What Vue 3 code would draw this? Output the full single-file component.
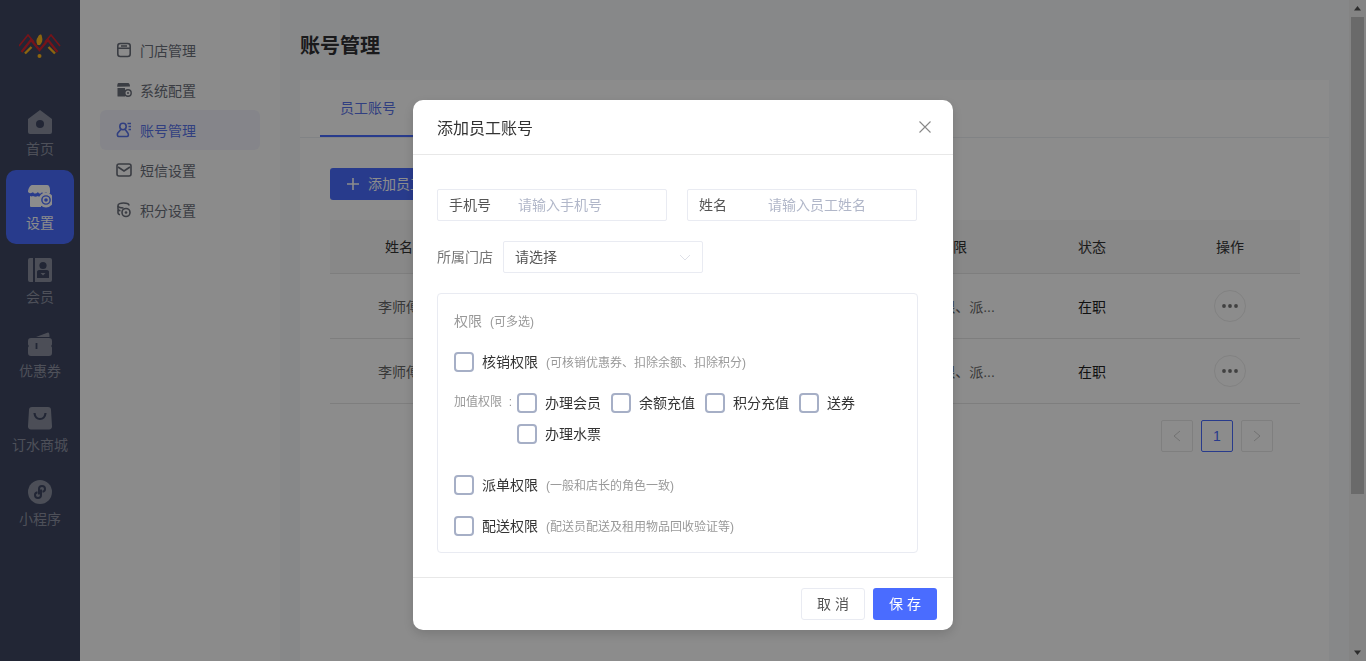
<script setup>
const sideItems = [
  { key: 'home', label: '首页' },
  { key: 'setting', label: '设置', active: true },
  { key: 'member', label: '会员' },
  { key: 'coupon', label: '优惠券' },
  { key: 'shop', label: '订水商城' },
  { key: 'mini', label: '小程序' },
];
const subItems = [
  { key: 'store', label: '门店管理' },
  { key: 'config', label: '系统配置' },
  { key: 'account', label: '账号管理', active: true },
  { key: 'sms', label: '短信设置' },
  { key: 'points', label: '积分设置' },
];
const rows = [
  { name: '李师傅', perm: '核销权限、派...', state: '在职' },
  { name: '李师傅', perm: '核销权限、派...', state: '在职' },
];
const valueOptions = ['办理会员', '余额充值', '积分充值', '送券', '办理水票'];
</script>

<template>
  <div class="page">
    <aside class="sidebar">
      <div class="logo">
        <svg width="42" height="26" viewBox="0 0 42 26" fill="none">
          <path d="M0 13 9 2 15 9M41 13 32 2 26 9" stroke="#d8242e" stroke-width="1.6" />
          <path d="M2.500 19 12 7 20.500 17 29 7 38.500 19" stroke="#d8242e" stroke-width="2.200" />
          <path d="M18.500 12c-1.500-3-1.500-6 .5-8 .5-2 2.500-3 3.500-2l.5 2c1 3 0 6-2 8z" fill="#ffb81c" />
          <path d="M6 20.500l6.500-6.500M36 20.500 29.500 14" stroke="#ffb81c" stroke-width="2.400" />
          <circle cx="20.500" cy="23" r="2" fill="#ffb81c" />
        </svg>
      </div>
      <div v-for="item in sideItems" :key="item.key" class="side-item" :class="{ active: item.active }">
        <svg class="side-icon" width="24" height="24" viewBox="0 0 24 24">
          <template v-if="item.key === 'home'">
            <path class="fill" d="M12 0 24 9v13a2 2 0 0 1-2 2H2a2 2 0 0 1-2-2V9z" />
            <circle class="hole" cx="12" cy="14" r="4" />
          </template>
          <template v-else-if="item.key === 'setting'">
            <path class="fill" d="M4 1h15c2 0 3 2 3 5v3c-2 1-3 0-4-1-1 1-3 2-4 0-1 2-3 2-4 0-2 2-4 2-5 0-1 1-3 2-5 0 0-3 2-7 4-7z" />
            <path class="fill" d="M2 12c1 .6 2 .6 3 0 2 1 3 1 5 0 1 1 2 1 3 .6V23H3a1 1 0 0 1-1-1z" />
            <circle class="fill" cx="18" cy="16" r="7.500" />
            <circle cx="18" cy="16" r="5.600" class="ring" />
            <circle cx="18" cy="16" r="2.600" fill="none" class="gear" stroke-width="1.600" />
          </template>
          <template v-else-if="item.key === 'member'">
            <path class="fill" d="M2 0h3v24H2a2 2 0 0 1-2-2V2a2 2 0 0 1 2-2zM7 0h15a2 2 0 0 1 2 2v20a2 2 0 0 1-2 2H7z" />
            <circle class="hole" cx="15" cy="7.500" r="3.600" />
            <path class="hole" d="M9 13.500a2 2 0 0 1 2-1.500h8a2 2 0 0 1 2 1.500V20H9z" />
            <path class="fill" d="M12.500 15h5L15 17.600z" />
          </template>
          <template v-else-if="item.key === 'coupon'">
            <path class="fill" d="M8 5 20 .5c1 0 1.500 1 1.500 4.500z" />
            <path class="fill" d="M3 6h18a3 3 0 0 1 3 3v3.500a2 2 0 0 0 0 3V21a3 3 0 0 1-3 3H3a3 3 0 0 1-3-3v-5.500a2 2 0 0 0 0-3V9a3 3 0 0 1 3-3z" />
            <rect class="hole" x="7.600" y="11" width="1.800" height="6" />
          </template>
          <template v-else-if="item.key === 'shop'">
            <path class="fill" d="M4 1h16a3 3 0 0 1 3 3l1 16a3 3 0 0 1-3 3.500H3A3 3 0 0 1 0 20L1 4a3 3 0 0 1 3-3z" />
            <path d="M6.500 7c.5 8 10.500 8 11 0" fill="none" class="gear" stroke-width="2.200" />
          </template>
          <template v-else>
            <circle class="fill" cx="12" cy="12" r="12" />
            <path d="M13 9.500v5.500c0 4-6 4-6 0 0-1.500 1-2.500 2.500-2.800M11 14.500V9c0-4 6-4 6 0 0 1.500-1 2.500-2.500 2.800" fill="none" class="gear" stroke-width="2" />
          </template>
        </svg>
        <span class="side-label">{{ item.label }}</span>
      </div>
    </aside>

    <nav class="subnav">
      <div v-for="item in subItems" :key="item.key" class="sub-item" :class="{ active: item.active }">
        <svg class="sub-icon" width="16" height="16" viewBox="0 0 16 16" fill="none" stroke="currentColor" stroke-width="1.600">
          <template v-if="item.key === 'store'">
            <rect x="1.800" y="1.500" width="12.400" height="13" rx="2.500" />
            <path d="M2 6.200h12M5 4h6" />
          </template>
          <template v-else-if="item.key === 'config'">
            <path d="M2.500 1h9.500c1.500 0 2 2 2 3.500l-12.800.2C1.200 3 1.500 1 2.500 1z" fill="currentColor" stroke="none" />
            <path d="M1.500 6h7.500v8.500H2a.5.5 0 0 1-.5-.5z" fill="currentColor" stroke="none" />
            <circle cx="12" cy="11" r="3.200" stroke-width="1.400" />
            <circle cx="12" cy="11" r="1" fill="currentColor" stroke="none" />
          </template>
          <template v-else-if="item.key === 'account'">
            <circle cx="7" cy="4.500" r="3.200" />
            <path d="M4.800 7.500 1.800 11c-.8 1.300-.5 3.500 1 3.500h8c1.800 0 2-2.200 1-3.500L9.200 7.500" />
            <path d="M11.500 1.500h3.500M12.500 4.500H15M12.500 7.500H15" stroke-width="1.300" />
          </template>
          <template v-else-if="item.key === 'sms'">
            <rect x="1" y="2" width="14" height="12" rx="2" />
            <path d="M2 5l6 4 6-4" />
          </template>
          <template v-else>
            <path d="M13 3.500C13 2 10.500 1 7.500 1S2 2 2 3.500 4.500 6 7.500 6" />
            <path d="M2 4v3c0 .8 1 1.500 2.500 1.800M2 8v3c0 .8.800 1.500 2 1.800" />
            <circle cx="10" cy="10.500" r="4" />
            <circle cx="10" cy="10.500" r="1.300" fill="currentColor" stroke="none" />
          </template>
        </svg>
        <span>{{ item.label }}</span>
      </div>
    </nav>

    <main class="main">
      <h1 class="page-title">账号管理</h1>
      <section class="card">
        <div class="tabs">
          <div class="tab active"><span class="lift">员工账号</span></div>
        </div>
        <div class="card-body">
          <button class="add-btn">
            <svg width="12" height="12" viewBox="0 0 12 12"><path d="M6 0v12M0 6h12" stroke="currentColor" stroke-width="1.600" /></svg>
            <span class="lift">添加员工</span>
          </button>
          <div class="table">
            <div class="tr th">
              <div>姓名</div>
              <div></div>
              <div></div>
              <div>权限</div>
              <div>状态</div>
              <div>操作</div>
            </div>
            <div v-for="(row, i) in rows" :key="i" class="tr td">
              <div>{{ row.name }}</div>
              <div></div>
              <div></div>
              <div class="perm-cell">{{ row.perm }}</div>
              <div class="state-cell">{{ row.state }}</div>
              <div>
                <span class="more">
                  <svg width="16" height="4" viewBox="0 0 16 4" fill="currentColor">
                    <circle cx="2" cy="2" r="1.900" /><circle cx="8" cy="2" r="1.900" /><circle cx="14" cy="2" r="1.900" />
                  </svg>
                </span>
              </div>
            </div>
          </div>
          <div class="pager">
            <span class="pg">
              <svg width="8" height="12" viewBox="0 0 8 12" fill="none" stroke="currentColor"><path d="M7 1 1 6l6 5" /></svg>
            </span>
            <span class="pg current">1</span>
            <span class="pg">
              <svg width="8" height="12" viewBox="0 0 8 12" fill="none" stroke="currentColor"><path d="m1 1 6 5-6 5" /></svg>
            </span>
          </div>
        </div>
      </section>
    </main>

    <div class="scrollbar">
      <svg class="sb-arrow" width="17" height="17" viewBox="0 0 17 17"><path d="M8.500 6 12 10.500H5z" /></svg>
      <div class="sb-track"><div class="sb-thumb"></div></div>
      <svg class="sb-arrow" width="17" height="17" viewBox="0 0 17 17"><path d="M8.500 11 12 6.500H5z" /></svg>
    </div>

    <div class="mask">
      <div class="dialog">
        <header class="dialog-head">
          <span class="dialog-title">添加员工账号</span>
          <svg class="dialog-close" width="14" height="14" viewBox="0 0 14 14" fill="none" stroke="currentColor" stroke-width="1.100"><path d="m1.500 1.500 11 11M12.500 1.500l-11 11" /></svg>
        </header>
        <div class="dialog-body">
          <div class="form-row">
            <label class="field">
              <span class="field-label lift">手机号</span>
              <input class="field-input" placeholder="请输入手机号" />
            </label>
            <label class="field">
              <span class="field-label lift">姓名</span>
              <input class="field-input" placeholder="请输入员工姓名" />
            </label>
          </div>
          <div class="store-row">
            <span class="store-label lift">所属门店</span>
            <div class="select">
              <span class="lift">请选择</span>
              <svg width="12" height="7" viewBox="0 0 12 7" fill="none" stroke="#dfe1e8"><path d="m1 1 5 5 5-5" /></svg>
            </div>
          </div>
          <div class="perm-box">
            <div class="perm-title">权限<small>(可多选)</small></div>
            <label class="check-row">
              <input type="checkbox" class="check" />
              <span class="check-text lift">核销权限</span>
              <small class="hint lift">(可核销优惠券、扣除余额、扣除积分)</small>
            </label>
            <div class="value-row">
              <span class="value-label">加值权限&nbsp;&nbsp;:</span>
              <div class="value-opts">
                <label v-for="opt in valueOptions" :key="opt" class="opt">
                  <input type="checkbox" class="check" />
                  <span class="check-text lift">{{ opt }}</span>
                </label>
              </div>
            </div>
            <label class="check-row dispatch">
              <input type="checkbox" class="check" />
              <span class="check-text lift">派单权限</span>
              <small class="hint lift">(一般和店长的角色一致)</small>
            </label>
            <label class="check-row">
              <input type="checkbox" class="check" />
              <span class="check-text lift">配送权限</span>
              <small class="hint lift">(配送员配送及租用物品回收验证等)</small>
            </label>
          </div>
        </div>
        <footer class="dialog-foot">
          <button class="btn-cancel"><span class="lift">取 消</span></button>
          <button class="btn-save"><span class="lift">保 存</span></button>
        </footer>
      </div>
    </div>
  </div>
</template>

<style scoped>
.page {
  display: flex; width: 1366px; height: 661px; overflow: hidden; background: #f6f7f9;
  font-family: "Liberation Sans", "Noto Sans CJK SC", sans-serif; font-size: 14px; color: #333;
}
/* CJK glyphs sit a touch low in these boxes */
.lift { display: inline-block; margin-bottom: 2px; }

.sidebar { width: 80px; flex: none; background: #3e4661; display: flex; flex-direction: column; align-items: center; }
.logo { height: 96px; width: 100%; box-sizing: border-box; padding: 33px 0 0 19px; }
.logo svg { display: block; }
.side-item {
  width: 68px; height: 74px; box-sizing: border-box; padding-top: 14px; border-radius: 10px;
  display: flex; flex-direction: column; align-items: center; gap: 7px; color: #8f93a3;
}
.side-item.active { background: #4a6cff; color: #fff; }
.side-icon { display: block; }
.side-icon .fill { fill: #8a8f9f; }
.side-icon .hole { fill: #3e4661; }
.side-icon .gear { stroke: #3e4661; }
.side-icon .ring { fill: #4a6cff; stroke: #fff; stroke-width: 1.5; }
.side-item.active .fill { fill: #fff; }
.side-item.active .gear { stroke: #fff; }
.side-label { line-height: 16px; }

.subnav { width: 200px; flex: none; box-sizing: border-box; background: #fdfdfd; padding: 30px 20px 0; }
.sub-item { height: 40px; border-radius: 6px; display: flex; align-items: center; gap: 8px; padding-left: 16px; color: #6b6f7a; }
.sub-item.active { background: #f2f3fb; color: #5a73ea; }
.sub-icon { flex: none; }

.main { flex: 1; min-width: 0; display: flex; flex-direction: column; padding: 0 20px; }
.page-title { margin: 0; height: 80px; flex: none; display: flex; align-items: center; padding-top: 9px; box-sizing: border-box; font-size: 20px; font-weight: 700; color: #303133; }
.card { flex: 1; background: #fff; }
.tabs { height: 58px; box-sizing: border-box; border-bottom: 1px solid #eceef2; padding-left: 20px; display: flex; }
.tab { width: 96px; height: 57px; box-sizing: border-box; display: flex; align-items: center; justify-content: center; }
.tab.active { color: #5a73ea; border-bottom: 2px solid #4a6cff; }
.card-body { padding: 30px 29px 0 30px; }
.add-btn {
  height: 32px; width: 130px; border: none; border-radius: 3px; background: #4a6cff; color: #fff; font: inherit;
  display: flex; align-items: center; gap: 9px; padding: 0 0 0 17px;
}
.table { margin-top: 20px; }
.tr { display: grid; grid-template-columns: 138px 1fr 200px 142px 136px 140px; align-items: center; text-align: center; border-bottom: 1px solid #e6e6e6; }
.th { height: 54px; box-sizing: border-box; padding-bottom: 2px; background: #f7f7f7; color: #333; }
.td { height: 65px; box-sizing: border-box; color: #666; }
.perm-cell { padding-right: 12px; white-space: nowrap; }
.state-cell { color: #222; }
.more {
  width: 32px; height: 32px; box-sizing: border-box; border: 1px solid #ececec; border-radius: 50%;
  display: inline-flex; align-items: center; justify-content: center; color: #777; vertical-align: middle;
}
.pager { display: flex; justify-content: flex-end; gap: 8px; margin: 16px 27px 0 0; }
.pg {
  width: 32px; height: 32px; box-sizing: border-box; border: 1px solid #e8e8e8; border-radius: 2px; background: #fff; color: #d0d0d0;
  display: flex; align-items: center; justify-content: center;
}
.pg.current { border-color: #4a6cff; color: #4a6cff; }

.scrollbar { width: 17px; flex: none; background: #f1f1f1; display: flex; flex-direction: column; }
.sb-arrow { flex: none; fill: #505050; }
.sb-track { flex: 1; padding: 0 2px; }
.sb-thumb { height: 477px; background: #c1c1c1; }

.mask {
  position: fixed; inset: 0; background: rgba(0, 0, 0, 0.45); z-index: 100;
  display: flex; justify-content: center; align-items: flex-start; padding-top: 100px; box-sizing: border-box;
}
.dialog { width: 540px; height: 530px; background: #fff; border-radius: 10px; display: flex; flex-direction: column; box-shadow: 0 4px 12px rgba(0, 0, 0, 0.15); }
.dialog-head { height: 55px; flex: none; box-sizing: border-box; border-bottom: 1px solid #e8e8e8; display: flex; align-items: center; justify-content: space-between; padding: 0 21px 0 24px; }
.dialog-title { font-size: 16px; color: #333; }
.dialog-close { color: #888; }
.dialog-body { flex: 1; padding: 34px 35px 0 24px; }
.form-row { display: flex; gap: 20px; margin-right: 1px; }
.field { width: 230px; height: 32px; box-sizing: border-box; border: 1px solid #e9ebf2; border-radius: 2px; display: flex; align-items: center; padding-left: 11px; }
.field-label { width: 69px; flex: none; color: #555; }
.field-input { flex: 1; min-width: 0; border: none; outline: none; padding: 0; font: inherit; color: #333; background: none; }
.field-input::placeholder { color: #b1b7c9; }
.store-row { display: flex; align-items: center; gap: 10px; margin-top: 20px; }
.store-label { color: #777; }
.select {
  width: 200px; height: 32px; box-sizing: border-box; border: 1px solid #e9ebf2; border-radius: 2px;
  display: flex; align-items: center; justify-content: space-between; padding: 0 11px; color: #555;
}
.perm-box { width: 481px; height: 260px; box-sizing: border-box; margin-top: 20px; border: 1px solid #e9ebf2; border-radius: 4px; padding: 17px 16px 0; }
.perm-title { height: 20px; line-height: 20px; color: #999; }
.perm-title small { font-size: 12px; margin-left: 8px; }
.check-row { display: flex; align-items: center; height: 20px; margin-top: 21px; }
.check-row.dispatch { margin-top: 31px; }
.check {
  appearance: none; width: 20px; height: 20px; flex: none; margin: 0; box-sizing: border-box;
  border: 2px solid #a6afc6; border-radius: 4px; background: #fff;
}
.check-text { margin-left: 8px; color: #333; white-space: nowrap; }
.hint { margin-left: 8px; font-size: 12px; color: #999; }
.value-row { display: flex; margin-top: 21px; }
.value-label { width: 63px; flex: none; font-size: 12px; line-height: 18px; color: #999; white-space: nowrap; }
.value-opts { display: flex; flex-wrap: wrap; gap: 11px 10px; }
.opt { display: flex; align-items: center; height: 20px; }
.dialog-foot { height: 53px; flex: none; box-sizing: border-box; border-top: 1px solid #e8e8e8; display: flex; justify-content: flex-end; align-items: center; gap: 8px; padding: 0 16px; }
.btn-cancel, .btn-save { width: 64px; height: 32px; border-radius: 3px; font: inherit; padding: 0; }
.btn-cancel { background: #fff; border: 1px solid #e9ebf2; color: #555; }
.btn-save { background: #4a6cff; border: none; color: #fff; }
</style>

<style>
html, body { margin: 0; overflow: hidden; }
</style>
